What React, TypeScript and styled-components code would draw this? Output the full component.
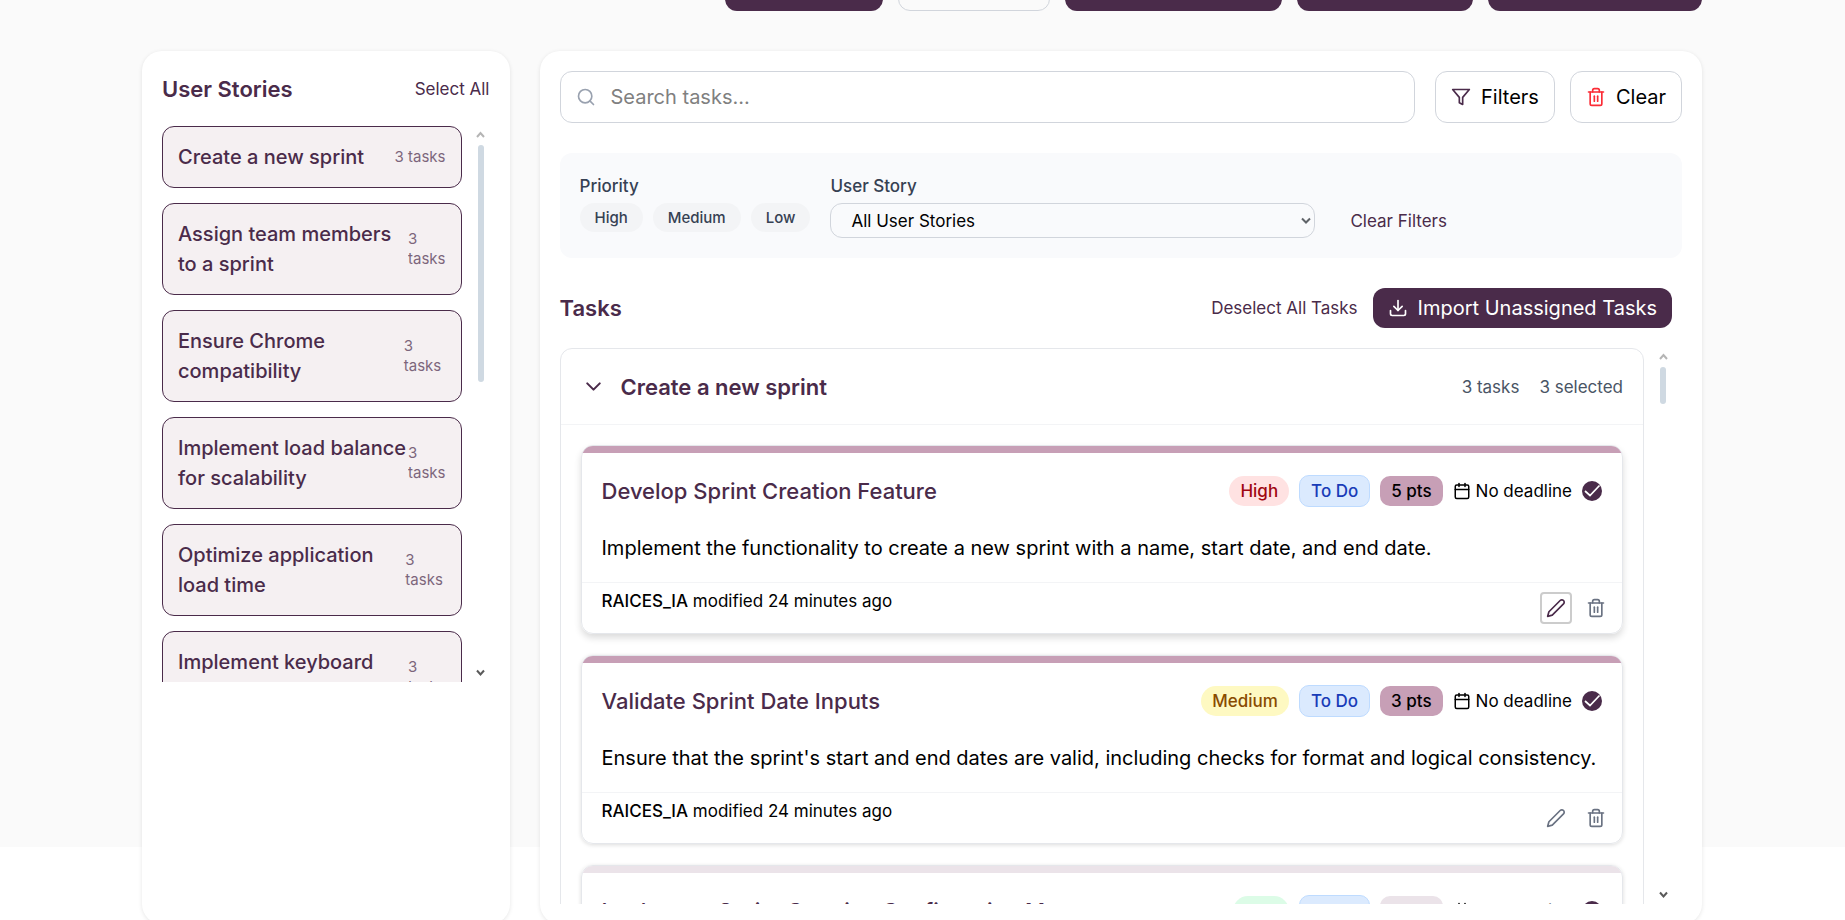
import React from "react";
import styled, { createGlobalStyle, css } from "styled-components";
import { FiSearch, FiFilter, FiTrash2, FiDownload, FiChevronDown, FiEdit2, FiCalendar } from "react-icons/fi";

const plum = "#4a2b4a";

const GlobalStyle = createGlobalStyle`
  *, *::before, *::after { box-sizing: border-box; }
  body {
    margin: 0;
    background: #fff;
    color: #000;
    font-family: Inter, "Liberation Sans", sans-serif;
    font-size: 20px;
    line-height: 30px;
  }
  h2, h3, h4, p, ul { margin: 0; padding: 0; font-weight: inherit; }
  ul { list-style: none; }
  button, input, select { font: inherit; color: inherit; }
  button { cursor: pointer; border: 0; padding: 0; background: none; }
`;

const Viewport = styled.div`
  height: 100vh;
  overflow: hidden;
`;

const Page = styled.div`
  height: calc(100vh - 73px);
  background: #fafafa;
`;

const Container = styled.div`
  max-width: 1601px;
  margin: 0 auto;
  padding: 0 21px 0 20px;
`;

const ActionBar = styled.div`
  display: flex;
  justify-content: flex-end;
  align-items: flex-end;
  gap: 15px;
  height: 11px;
  margin-bottom: 40px;
  overflow: hidden;
`;

const ActionButton = styled.button<{ $width: number; $outline?: boolean }>`
  flex: none;
  width: ${(p) => p.$width}px;
  height: 50px;
  border-radius: 12px;
  background: ${plum};
  ${(p) =>
    p.$outline &&
    css`
      background: transparent;
      border: 1px solid #d1d5dc;
    `}
`;

const Columns = styled.div`
  display: grid;
  grid-template-columns: repeat(4, minmax(0, 1fr));
  gap: 30px;
`;

const Panel = styled.section<{ $span?: number }>`
  grid-column: span ${(p) => p.$span ?? 1};
  padding: 20px;
  border-radius: 20px;
  background: #fff;
  box-shadow: 0 1px 4px rgba(0, 0, 0, 0.1);
`;

const SidebarHead = styled.div`
  display: flex;
  justify-content: space-between;
  align-items: center;
  height: 35px;
  margin-bottom: 20px;
`;

const Heading = styled.h2`
  color: ${plum};
  font-size: 22px;
  font-weight: 600;
`;

const TextButton = styled.button`
  color: ${plum};
  font-size: 17px;
  line-height: 26px;
`;

const ScrollArea = styled.div`
  display: flex;
  gap: 10px;
  height: 556px;
`;

const ScrollBody = styled.div`
  flex: 1;
  min-width: 0;
  overflow: hidden;
`;

const ScrollTrack = styled.div`
  flex: none;
  width: 18px;
  display: flex;
  flex-direction: column;
  align-items: center;
  padding: 4px 0 5px;
`;

const ScrollThumb = styled.div<{ $length: number }>`
  width: 6px;
  height: ${(p) => p.$length}px;
  margin: 6px 0 auto;
  border-radius: 3px;
  background: #cfd9e2;
`;

const StoryList = styled.ul`
  display: flex;
  flex-direction: column;
  gap: 15px;
`;

const StoryButton = styled.button`
  display: flex;
  justify-content: space-between;
  align-items: center;
  width: 100%;
  padding: 15px;
  border: 1px solid ${plum};
  border-radius: 12px;
  background: #f5f0f2;
  color: ${plum};
  text-align: left;
`;

const StoryName = styled.span`
  font-weight: 500;
`;

const StoryCount = styled.span`
  font-size: 15px;
  line-height: 20px;
  opacity: 0.7;
`;

const SearchRow = styled.div`
  display: flex;
  gap: 20px;
  margin-bottom: 30px;
`;

const SearchBox = styled.label`
  flex: 1;
  display: flex;
  align-items: center;
  gap: 15px;
  height: 52px;
  padding: 0 15px;
  border: 1px solid #d1d5dc;
  border-radius: 12px;
  svg { color: #99a1af; }
`;

const SearchInput = styled.input`
  flex: 1;
  min-width: 0;
  border: 0;
  padding: 0;
  outline: none;
  background: transparent;
  &::placeholder { color: #808080; }
`;

const ButtonGroup = styled.div`
  display: flex;
  gap: 15px;
`;

const OutlineButton = styled.button<{ $iconColor: string }>`
  display: flex;
  align-items: center;
  gap: 10px;
  padding: 0 15px;
  border: 1px solid #d1d5dc;
  border-radius: 12px;
  svg { color: ${(p) => p.$iconColor}; }
`;

const FilterPanel = styled.div`
  display: flex;
  gap: 20px;
  padding: 20px;
  margin-bottom: 30px;
  border-radius: 12px;
  background: #f9fafc;
`;

const Field = styled.div<{ $wide?: boolean }>`
  display: flex;
  flex-direction: column;
  gap: 4px;
  ${(p) => p.$wide && css`flex: 0 1 485px;`}
`;

const FieldLabel = styled.label`
  color: #364153;
  font-size: 17px;
  line-height: 26px;
  font-weight: 500;
`;

const Pills = styled.div`
  display: flex;
  gap: 10px;
`;

const Pill = styled.button`
  height: 29px;
  padding: 0 15px;
  border-radius: 15px;
  background: #f3f4f6;
  color: #364153;
  font-size: 15px;
  line-height: 20px;
  font-weight: 500;
`;

const SelectBox = styled.div`
  display: grid;
  align-items: center;
  > * { grid-area: 1 / 1; }
  svg {
    justify-self: end;
    margin-right: 4px;
    pointer-events: none;
  }
`;

const Select = styled.select`
  appearance: none;
  width: 100%;
  height: 35px;
  padding: 0 20px;
  border: 1px solid #d1d5dc;
  border-radius: 12px;
  background: transparent;
  font-size: 17px;
`;

const ClearFilters = styled(TextButton)`
  align-self: flex-end;
  height: 35px;
  padding: 0 15px;
`;

const TasksArea = styled.div`
  padding-right: 10px;
`;

const TasksHead = styled.div`
  display: flex;
  align-items: center;
  gap: 15px;
  height: 40px;
  margin-bottom: 20px;
  ${Heading} { margin-right: auto; }
`;

const ImportButton = styled.button`
  display: flex;
  align-items: center;
  gap: 10px;
  height: 40px;
  padding: 0 15px;
  border-radius: 12px;
  background: ${plum};
  color: #fff;
`;

const Group = styled.div`
  border: 1px solid #e5e7eb;
  border-radius: 12px;
`;

const GroupHead = styled.div`
  display: flex;
  align-items: center;
  gap: 15px;
  height: 76px;
  padding: 0 20px;
  border-bottom: 1px solid #f3f4f6;
  color: ${plum};
`;

const IconButton = styled.button<{ $focused?: boolean }>`
  display: grid;
  place-items: center;
  width: 32px;
  height: 32px;
  border-radius: 4px;
  color: ${(p) => (p.$focused ? plum : "#6a7282")};
  ${(p) => p.$focused && css`border: 2px solid #ccc;`}
`;

const ToggleButton = styled.button`
  display: grid;
  place-items: center;
  width: 25px;
  height: 25px;
`;

const GroupTitle = styled.h3`
  flex: 1;
  font-size: 22px;
  font-weight: 600;
`;

const GroupMeta = styled.div`
  display: flex;
  gap: 20px;
  color: #4a5565;
  font-size: 17px;
  line-height: 26px;
`;

const TaskList = styled.ul`
  display: flex;
  flex-direction: column;
  gap: 21px;
  padding: 20px;
`;

const TaskCard = styled.li<{ $accent: string; $raised?: boolean }>`
  border: 1px solid #e5e7eb;
  border-radius: 12px;
  overflow: hidden;
  box-shadow: ${(p) =>
    p.$raised ? "0 4px 7px rgba(0,0,0,0.14)" : "0 1px 4px rgba(0,0,0,0.14)"};
  &::before {
    content: "";
    display: block;
    height: 7px;
    background: ${(p) => p.$accent};
  }
`;

const TaskMain = styled.div`
  padding: 20px 20px 0;
  height: 129px;
`;

const TaskTop = styled.div`
  display: flex;
  align-items: center;
  gap: 10px;
  height: 36px;
  margin-bottom: 24px;
`;

const TaskTitle = styled.h4`
  flex: 1;
  color: ${plum};
  font-size: 22px;
  font-weight: 500;
  white-space: nowrap;
`;

const Badge = styled.span<{ $bg: string; $fg: string; $round?: boolean; $line?: string }>`
  padding: 2px 11px;
  border-radius: ${(p) => (p.$round ? 15 : 10)}px;
  border: ${(p) => (p.$line ? `1px solid ${p.$line}` : "0")};
  background: ${(p) => p.$bg};
  color: ${(p) => p.$fg};
  font-size: 17px;
  line-height: 26px;
  font-weight: 500;
`;

const Deadline = styled.span`
  display: flex;
  align-items: center;
  gap: 5px;
  font-size: 17px;
  line-height: 26px;
`;

const TaskFoot = styled.div`
  display: flex;
  justify-content: space-between;
  height: 51px;
  padding: 5px 10px 0 20px;
  border-top: 1px solid #f3f4f6;
  font-size: 17px;
  line-height: 26px;
  b { font-weight: 500; }
`;

const FootActions = styled.div`
  display: flex;
  gap: 8px;
  padding-top: 4px;
`;

function Arrow({ up }: { up?: boolean }) {
  return (
    <svg width="9" height="9" viewBox="0 0 9 9" fill="none" stroke={up ? "#b5b5b5" : "#5a5a5a"} strokeWidth="2">
      <path d={up ? "M1 7 4.5 3 8 7" : "M1 2.5 4.5 6.5 8 2.5"} />
    </svg>
  );
}

function Scrollbar({ length }: { length: number }) {
  return (
    <ScrollTrack aria-hidden="true">
      <Arrow up />
      <ScrollThumb $length={length} />
      <Arrow />
    </ScrollTrack>
  );
}

function SelectedMark() {
  return (
    <svg width="20" height="20" viewBox="0 0 20 20" fill="none" role="img" aria-label="Selected">
      <circle cx="10" cy="10" r="10" fill={plum} />
      <path d="M3 10 8 14.5 17.5 4.5" stroke="#fff" strokeWidth="1.7" />
    </svg>
  );
}

const actions = [
  { label: "Select All", width: 158 },
  { label: "Cancel", width: 152, outline: true },
  { label: "Generate Tasks", width: 217 },
  { label: "Add Task", width: 176 },
  { label: "Create Sprint", width: 214 },
];

const stories = [
  "Create a new sprint",
  "Assign team members to a sprint",
  "Ensure Chrome compatibility",
  "Implement load balance for scalability",
  "Optimize application load time",
  "Implement keyboard accessibility",
];

const priorities = {
  High: { bg: "#ffe2e2", fg: "#9f0712" },
  Medium: { bg: "#fef9c2", fg: "#894b00" },
  Low: { bg: "#dcfce7", fg: "#016630" },
};

type Task = {
  title: string;
  text: string;
  priority: keyof typeof priorities;
  points: number;
  accent: string;
  active?: boolean;
};

const tasks: Task[] = [
  {
    title: "Develop Sprint Creation Feature",
    text: "Implement the functionality to create a new sprint with a name, start date, and end date.",
    priority: "High",
    points: 5,
    accent: "#c79fb6",
    active: true,
  },
  {
    title: "Validate Sprint Date Inputs",
    text: "Ensure that the sprint's start and end dates are valid, including checks for format and logical consistency.",
    priority: "Medium",
    points: 3,
    accent: "#c79fb6",
  },
  {
    title: "Implement Sprint Creation Confirmation Message",
    text: "Show a confirmation message once a sprint has been created.",
    priority: "Low",
    points: 2,
    accent: "#ebe3e9",
  },
];

function TaskItem({ task }: { task: Task }) {
  const tone = priorities[task.priority];
  return (
    <TaskCard $accent={task.accent} $raised={task.active}>
      <TaskMain>
        <TaskTop>
          <TaskTitle>{task.title}</TaskTitle>
          <Badge $bg={tone.bg} $fg={tone.fg} $round>{task.priority}</Badge>
          <Badge $bg="#dbeafe" $fg="#193cb8" $line="#bedbff">To Do</Badge>
          <Badge $bg={task.accent} $fg="#000">{task.points} pts</Badge>
          <Deadline>
            <FiCalendar size={18} />
            No deadline
          </Deadline>
          <SelectedMark />
        </TaskTop>
        <p>{task.text}</p>
      </TaskMain>
      <TaskFoot>
        <p><b>RAICES_IA</b> modified 24 minutes ago</p>
        <FootActions>
          <IconButton $focused={task.active} aria-label="Edit task"><FiEdit2 size={20} /></IconButton>
          <IconButton aria-label="Delete task"><FiTrash2 size={20} /></IconButton>
        </FootActions>
      </TaskFoot>
    </TaskCard>
  );
}

export default function App() {
  return (
    <Viewport>
      <GlobalStyle />
      <Page>
        <Container>
          <ActionBar>
            {actions.map((a) => (
              <ActionButton key={a.label} aria-label={a.label} $width={a.width} $outline={a.outline} />
            ))}
          </ActionBar>
          <Columns>
            <Panel>
              <SidebarHead>
                <Heading>User Stories</Heading>
                <TextButton>Select All</TextButton>
              </SidebarHead>
              <ScrollArea>
                <ScrollBody>
                  <StoryList>
                    {stories.map((s) => (
                      <li key={s}>
                        <StoryButton>
                          <StoryName>{s}</StoryName>
                          <StoryCount>3 tasks</StoryCount>
                        </StoryButton>
                      </li>
                    ))}
                  </StoryList>
                </ScrollBody>
                <Scrollbar length={237} />
              </ScrollArea>
            </Panel>

            <Panel $span={3}>
              <SearchRow>
                <SearchBox>
                  <FiSearch size={20} />
                  <SearchInput type="text" aria-label="Search tasks" placeholder="Search tasks..." />
                </SearchBox>
                <ButtonGroup>
                  <OutlineButton $iconColor={plum}><FiFilter size={20} />Filters</OutlineButton>
                  <OutlineButton $iconColor="#fb2c36"><FiTrash2 size={20} />Clear</OutlineButton>
                </ButtonGroup>
              </SearchRow>

              <FilterPanel>
                <Field role="group" aria-labelledby="priority-label">
                  <FieldLabel as="span" id="priority-label">Priority</FieldLabel>
                  <Pills>
                    <Pill>High</Pill>
                    <Pill>Medium</Pill>
                    <Pill>Low</Pill>
                  </Pills>
                </Field>
                <Field $wide>
                  <FieldLabel htmlFor="story">User Story</FieldLabel>
                  <SelectBox>
                    <Select id="story" defaultValue="">
                      <option value="">All User Stories</option>
                      {stories.map((s) => <option key={s}>{s}</option>)}
                    </Select>
                    <svg width="10" height="8" viewBox="0 0 10 8" fill="none" stroke="#5f6368" strokeWidth="2" aria-hidden="true">
                      <path d="M1 1.5 5 5.5 9 1.5" />
                    </svg>
                  </SelectBox>
                </Field>
                <ClearFilters>Clear Filters</ClearFilters>
              </FilterPanel>

              <TasksArea>
                <TasksHead>
                  <Heading>Tasks</Heading>
                  <TextButton>Deselect All Tasks</TextButton>
                  <ImportButton><FiDownload size={20} />Import Unassigned Tasks</ImportButton>
                </TasksHead>
                <ScrollArea>
                  <ScrollBody>
                    <Group>
                      <GroupHead>
                        <ToggleButton aria-label="Collapse story" aria-expanded="true"><FiChevronDown size={25} /></ToggleButton>
                        <GroupTitle>Create a new sprint</GroupTitle>
                        <GroupMeta><span>3 tasks</span><span>3 selected</span></GroupMeta>
                      </GroupHead>
                      <TaskList>
                        {tasks.map((t) => <TaskItem key={t.title} task={t} />)}
                      </TaskList>
                    </Group>
                  </ScrollBody>
                  <Scrollbar length={37} />
                </ScrollArea>
              </TasksArea>
            </Panel>
          </Columns>
        </Container>
      </Page>
    </Viewport>
  );
}
